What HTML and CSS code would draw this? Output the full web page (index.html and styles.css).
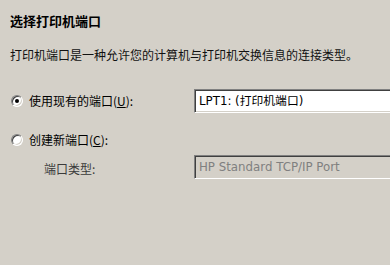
FILE: index.html
```html
<!DOCTYPE html>
<html lang="zh-CN">
<head>
<meta charset="utf-8">
<title>选择打印机端口</title>
<link rel="stylesheet" href="styles.css">
</head>
<body>
<div class="page">
  <h1 class="title">选择打印机端口</h1>
  <p class="desc">打印机端口是一种允许您的计算机与打印机交换信息的连接类型。</p>
  <div class="form">
    <div class="row row-existing">
      <label class="choice"><span class="radio checked"></span><span class="label">使用现有的端口(<u>U</u>):</span></label>
      <div class="field"><span class="field-text">LPT1: (打印机端口)</span></div>
    </div>
    <div class="row row-new">
      <label class="choice"><span class="radio"></span><span class="label">创建新端口(<u>C</u>):</span></label>
    </div>
    <div class="row row-type">
      <span class="sub-label">端口类型:</span>
      <div class="field disabled"><span class="field-text">HP Standard TCP/IP Port</span></div>
    </div>
  </div>
</div>
</body>
</html>
```
FILE: styles.css
```css
html, body {
  margin: 0;
  padding: 0;
  width: 390px;
  height: 265px;
  overflow: hidden;
  background: #d4d0c8;
}
body {
  font-family: "Noto Sans CJK SC", "DejaVu Sans", sans-serif;
  font-size: 12px;
  color: #000;
}
.page {
  padding: 12px 0 0 10px;
}
.title {
  margin: 0;
  font-size: 13px;
  line-height: 18px;
  font-weight: bold;
}
.desc {
  margin: 16px 0 0 0;
  font-size: 12px;
  line-height: 18px;
  color: #111;
}
.form {
  margin-top: 25px;
}
.row {
  display: grid;
  grid-template-columns: 184px 196px;
  align-items: center;
}
.row-existing { height: 24px; }
.row-new { height: 16px; margin-top: 19px; }
.row-type { height: 24px; margin-top: 7px; }
.choice {
  display: flex;
  align-items: center;
  gap: 6px;
  padding-left: 1px;
}
.label {
  line-height: 16px;
}
.label u {
  text-decoration: underline;
}
.radio {
  width: 12px;
  height: 12px;
  box-sizing: border-box;
  border-radius: 50%;
  border: 1px solid;
  border-color: #808080 #ffffff #ffffff #808080;
  box-shadow: inset 1px 1px 0 #404040, inset -1px -1px 0 #d4d0c8;
  background: #fff;
  display: flex;
  align-items: center;
  justify-content: center;
}
.radio.checked::after {
  content: "";
  width: 4px;
  height: 4px;
  border-radius: 50%;
  background: #000;
}
.sub-label {
  padding-left: 34px;
  padding-top: 4px;
  color: #3a3a3a;
  line-height: 16px;
}
.field {
  height: 24px;
  box-sizing: border-box;
  border: 1px solid;
  border-right: 0;
  border-color: #808080 #ffffff #ffffff #808080;
  box-shadow: inset 1px 1px 0 #404040, inset 0 -1px 0 #d4d0c8;
  background: #fff;
  display: flex;
  align-items: center;
  padding-left: 4px;
  overflow: hidden;
}
.field.disabled {
  background: #d4d0c8;
  color: #808080;
}
.field-text {
  font-family: "DejaVu Sans", "Noto Sans CJK SC", sans-serif;
  font-size: 11.8px;
  line-height: 16px;
  white-space: nowrap;
}
```
